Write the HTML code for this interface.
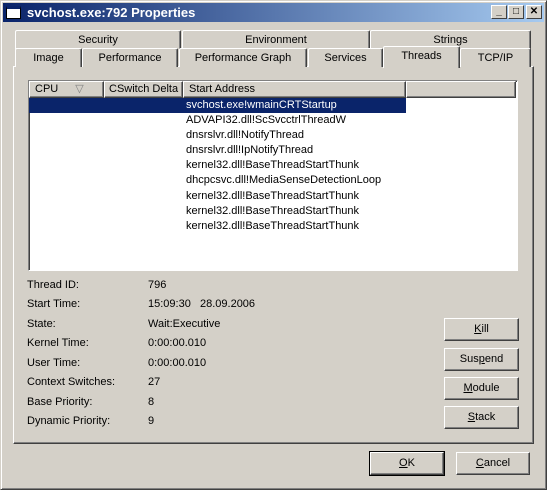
<!DOCTYPE html><html><head><style>
*{margin:0;padding:0;box-sizing:border-box}
body{width:547px;height:490px;background:#d4d0c8;font:11px "Liberation Sans",sans-serif;color:#000;position:relative;overflow:hidden}
.a{position:absolute;white-space:nowrap}
.win{left:0;top:0;width:547px;height:490px;border:1px solid;border-color:#d4d0c8 #404040 #404040 #d4d0c8;box-shadow:inset 1px 1px #fff,inset -1px -1px #808080}
.title{left:3px;top:3px;width:541px;height:19px;background:linear-gradient(90deg,#0a246a,#a6caf0);color:#fff;font-weight:bold;font-size:13px;line-height:19px;padding-left:24px}
.tb{top:5px;width:16px;height:14px;background:#d4d0c8;border:1px solid;border-color:#fff #404040 #404040 #fff;font-size:10px;line-height:12px;text-align:center;font-weight:bold}
.tab{height:19px;background:#d4d0c8;border-top:1px solid #fff;border-left:1px solid #fff;border-right:1px solid #404040;box-shadow:inset -1px 0 #808080;text-align:center;line-height:18px;border-radius:2px 2px 0 0}
.panel{left:13px;top:66px;width:521px;height:378px;border:1px solid;border-color:#fff #404040 #404040 #fff;box-shadow:inset -1px -1px #808080}
.list{left:28px;top:80px;width:490px;height:191px;background:#fff;border:1px solid;border-color:#808080 #fff #fff #808080;box-shadow:inset 1px 1px #404040}
.hd{top:81px;height:17px;background:#d4d0c8;border:1px solid;border-color:#fff #404040 #404040 #fff;box-shadow:inset -1px -1px #808080;line-height:15px;padding-left:5px;overflow:hidden}
.row{left:186px;line-height:15px}
.lb{left:27px}.vl{left:148px}
.btn{width:75px;height:23px;border:1px solid;border-color:#fff #404040 #404040 #fff;box-shadow:inset -1px -1px #808080;text-align:center;line-height:21px}
</style></head><body>
<div class="a win"></div>
<div class="a title">svchost.exe:792 Properties</div>
<div class="a" style="left:6px;top:6px;width:15px;height:13px;background:#fff;border:1px solid #000;border-top:3px solid #0a246a"></div>
<div class="a tb" style="left:491px">_</div>
<div class="a tb" style="left:508px">□</div>
<div class="a tb" style="left:526px">✕</div>
<div class="a tab" style="left:15px;top:30px;width:166px">Security</div>
<div class="a tab" style="left:182px;top:30px;width:188px">Environment</div>
<div class="a tab" style="left:370px;top:30px;width:161px">Strings</div>
<div class="a panel"></div>
<div class="a tab" style="left:15px;top:48px;width:67px">Image</div>
<div class="a tab" style="left:82px;top:48px;width:96px">Performance</div>
<div class="a tab" style="left:179px;top:48px;width:128px">Performance Graph</div>
<div class="a tab" style="left:308px;top:48px;width:75px">Services</div>
<div class="a tab" style="left:383px;top:46px;width:77px;height:22px;border-bottom:none;line-height:18px">Threads</div>
<div class="a tab" style="left:460px;top:48px;width:71px">TCP/IP</div>
<div class="a list"></div>
<div class="a hd" style="left:29px;width:75px">CPU <span style="color:#808080;margin-left:14px">▽</span></div>
<div class="a hd" style="left:104px;width:79px;padding-left:4px">CSwitch Delta</div>
<div class="a hd" style="left:183px;width:223px">Start Address</div>
<div class="a hd" style="left:406px;width:110px"></div>
<div class="a" style="left:29px;top:98px;width:377px;height:15px;background:#0a246a"></div>
<div class="a row" style="top:98px;color:#fff">svchost.exe!wmainCRTStartup</div>
<div class="a row" style="top:113px">ADVAPI32.dll!ScSvcctrlThreadW</div>
<div class="a row" style="top:128px">dnsrslvr.dll!NotifyThread</div>
<div class="a row" style="top:143px">dnsrslvr.dll!IpNotifyThread</div>
<div class="a row" style="top:158px">kernel32.dll!BaseThreadStartThunk</div>
<div class="a row" style="top:173px">dhcpcsvc.dll!MediaSenseDetectionLoop</div>
<div class="a row" style="top:189px">kernel32.dll!BaseThreadStartThunk</div>
<div class="a row" style="top:204px">kernel32.dll!BaseThreadStartThunk</div>
<div class="a row" style="top:219px">kernel32.dll!BaseThreadStartThunk</div>
<div class="a lb" style="top:279px">Thread ID:</div><div class="a vl" style="top:279px">796</div>
<div class="a lb" style="top:298px">Start Time:</div><div class="a vl" style="top:298px">15:09:30&nbsp;&nbsp;&nbsp;28.09.2006</div>
<div class="a lb" style="top:318px">State:</div><div class="a vl" style="top:318px">Wait:Executive</div>
<div class="a lb" style="top:337px">Kernel Time:</div><div class="a vl" style="top:337px">0:00:00.010</div>
<div class="a lb" style="top:357px">User Time:</div><div class="a vl" style="top:357px">0:00:00.010</div>
<div class="a lb" style="top:376px">Context Switches:</div><div class="a vl" style="top:376px">27</div>
<div class="a lb" style="top:396px">Base Priority:</div><div class="a vl" style="top:396px">8</div>
<div class="a lb" style="top:415px">Dynamic Priority:</div><div class="a vl" style="top:415px">9</div>
<div class="a btn" style="left:444px;top:318px"><u>K</u>ill</div>
<div class="a btn" style="left:444px;top:348px">Sus<u>p</u>end</div>
<div class="a btn" style="left:444px;top:377px"><u>M</u>odule</div>
<div class="a btn" style="left:444px;top:406px"><u>S</u>tack</div>
<div class="a btn" style="left:370px;top:452px;width:74px;outline:1px solid #000"><u>O</u>K</div>
<div class="a btn" style="left:456px;top:452px;width:74px"><u>C</u>ancel</div>
</body></html>
